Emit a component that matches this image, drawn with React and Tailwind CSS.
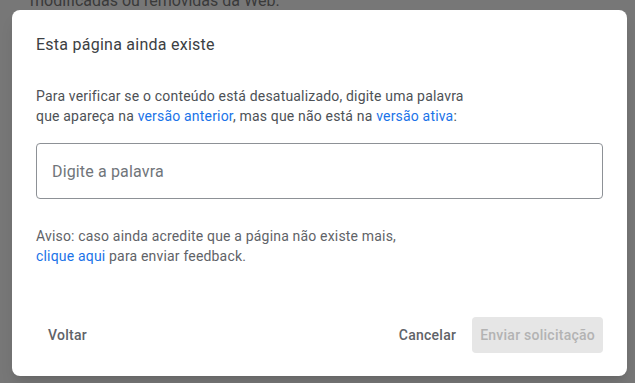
export default function App() {
    return (
        <div className="w-[635px] h-[383px] overflow-hidden bg-[#777777] font-['Roboto',sans-serif]">
            {/* page behind the modal */}
            <div className="h-[10px] overflow-hidden pl-[30px]">
                <p className="-mt-[9px] text-base leading-5 text-[#3a3a3a]">modificadas ou removidas da Web.</p>
            </div>

            {/* dialog */}
            <div className="ml-[12px] w-[615px] h-[366px] bg-white rounded-lg shadow-lg flex flex-col px-6 pt-[23px] pb-[23px]">
                <h2 className="text-base leading-6 tracking-[0.25px] text-[#3c4043]">Esta página ainda existe</h2>

                <p className="mt-[29px] text-sm leading-5 tracking-[0.18px] text-[#4d5156]">
                    Para verificar se o conteúdo está desatualizado, digite uma palavra
                    <br />
                    que apareça na <a className="text-[#1a73e8]">versão anterior</a>, mas que não está na{' '}
                    <a className="text-[#1a73e8]">versão ativa</a>:
                </p>

                <input
                    type="text"
                    placeholder="Digite a palavra"
                    className="mt-[17px] h-[56px] w-full rounded border border-[#8d9196] px-[15px] text-base tracking-[0.15px] text-[#3c4043] placeholder:text-[#70757a] outline-none"
                />

                <p className="mt-[27px] text-sm leading-5 tracking-[0.18px] text-[#5f6368]">
                    Aviso: caso ainda acredite que a página não existe mais,
                    <br />
                    <a className="text-[#1a73e8]">clique aqui</a> para enviar feedback.
                </p>

                <div className="mt-auto flex items-center">
                    <button className="h-9 px-3 text-sm font-medium tracking-[0.25px] text-[#5f6368]">Voltar</button>
                    <div className="ml-auto flex items-center gap-2">
                        <button className="h-9 px-2 text-sm font-medium tracking-[0.25px] text-[#5f6368]">Cancelar</button>
                        <button disabled className="h-9 px-2 rounded bg-[#e6e6e6] text-sm font-medium tracking-[0.25px] text-[#b3b3b3]">
                            Enviar solicitação
                        </button>
                    </div>
                </div>
            </div>
        </div>
    );
}
